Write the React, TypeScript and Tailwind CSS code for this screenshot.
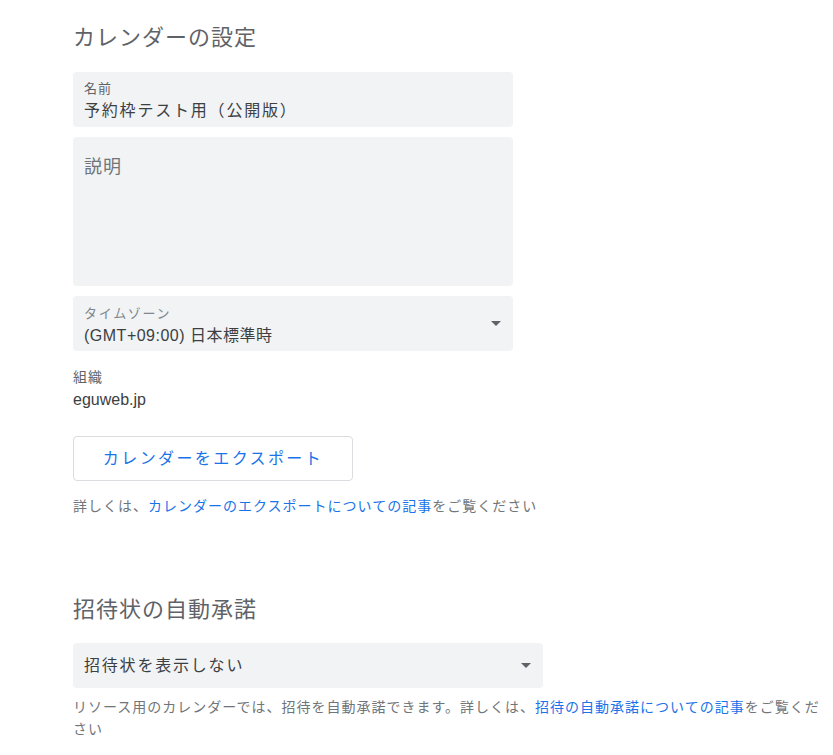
const font = "font-['Liberation_Sans','Noto_Sans_CJK_JP',sans-serif]";

function Arrow() {
  return (
    <svg width="10" height="5" viewBox="0 0 10 5" className="shrink-0">
      <path d="M0 0h10L5 5z" fill="#5f6368" />
    </svg>
  );
}

export default function App() {
  return (
    <div className={`${font} bg-white min-h-[755px] pl-[73px] pt-[24px] pb-[20px]`}>
      {/* カレンダーの設定 */}
      <h2 className="text-[22px] leading-[28px] tracking-[1px] text-[#5f6368] font-normal">
        カレンダーの設定
      </h2>

      <div className="mt-[20px] w-[440px] h-[55px] bg-[#f1f3f4] rounded-[4px] px-[11px] pt-[9px]">
        <div className="text-[13px] leading-[16px] tracking-[1px] text-[#5f6368]">名前</div>
        <div className="mt-[3px] text-[16px] leading-[22px] tracking-[1.8px] text-[#3c4043]">
          予約枠テスト用（公開版）
        </div>
      </div>

      <div className="mt-[10px] w-[440px] h-[149px] bg-[#f1f3f4] rounded-[4px] px-[11px] pt-[19px]">
        <div className="text-[18px] leading-[22px] tracking-[1px] text-[#70757a]">説明</div>
      </div>

      <div className="mt-[10px] w-[440px] h-[55px] bg-[#f1f3f4] rounded-[4px] pl-[11px] pr-[12px] flex items-center">
        <div className="flex-1 pt-[5px]">
          <div className="text-[13px] leading-[16px] tracking-[1.7px] text-[#80868b]">タイムゾーン</div>
          <div className="mt-[3px] text-[16px] leading-[22px] tracking-[0.5px] text-[#3c4043]">
            (GMT+09:00) 日本標準時
          </div>
        </div>
        <Arrow />
      </div>

      <div className="mt-[16px] text-[14px] leading-[20px] tracking-[1px] text-[#5f6368]">組織</div>
      <div className="mt-[2px] text-[16px] leading-[22px] text-[#3c4043]">eguweb.jp</div>

      <button
        type="button"
        className="mt-[25px] w-[280px] h-[45px] border border-[#dadce0] rounded-[4px] bg-white text-[16px] tracking-[2.4px] text-[#1a73e8] flex items-center justify-center"
      >
        カレンダーをエクスポート
      </button>

      <p className="mt-[15px] text-[14px] leading-[20px] tracking-[1px] text-[#70757a]">
        詳しくは、<a className="text-[#1a73e8]">カレンダーのエクスポートについての記事</a>をご覧ください
      </p>

      {/* 招待状の自動承諾 */}
      <h2 className="mt-[80px] text-[22px] leading-[28px] tracking-[1px] text-[#5f6368] font-normal">
        招待状の自動承諾
      </h2>

      <div className="mt-[19px] w-[470px] h-[45px] bg-[#f1f3f4] rounded-[4px] pl-[11px] pr-[12px] flex items-center">
        <div className="flex-1 text-[16px] leading-[22px] tracking-[1.8px] text-[#3c4043]">招待状を表示しない</div>
        <Arrow />
      </div>

      <p className="mt-[8px] w-[760px] text-[14px] leading-[22px] tracking-[1px] text-[#70757a]">
        リソース用のカレンダーでは、招待を自動承諾できます。詳しくは、<a className="text-[#1a73e8]">招待の自動承諾についての記事</a>をご覧ください
      </p>
    </div>
  );
}
